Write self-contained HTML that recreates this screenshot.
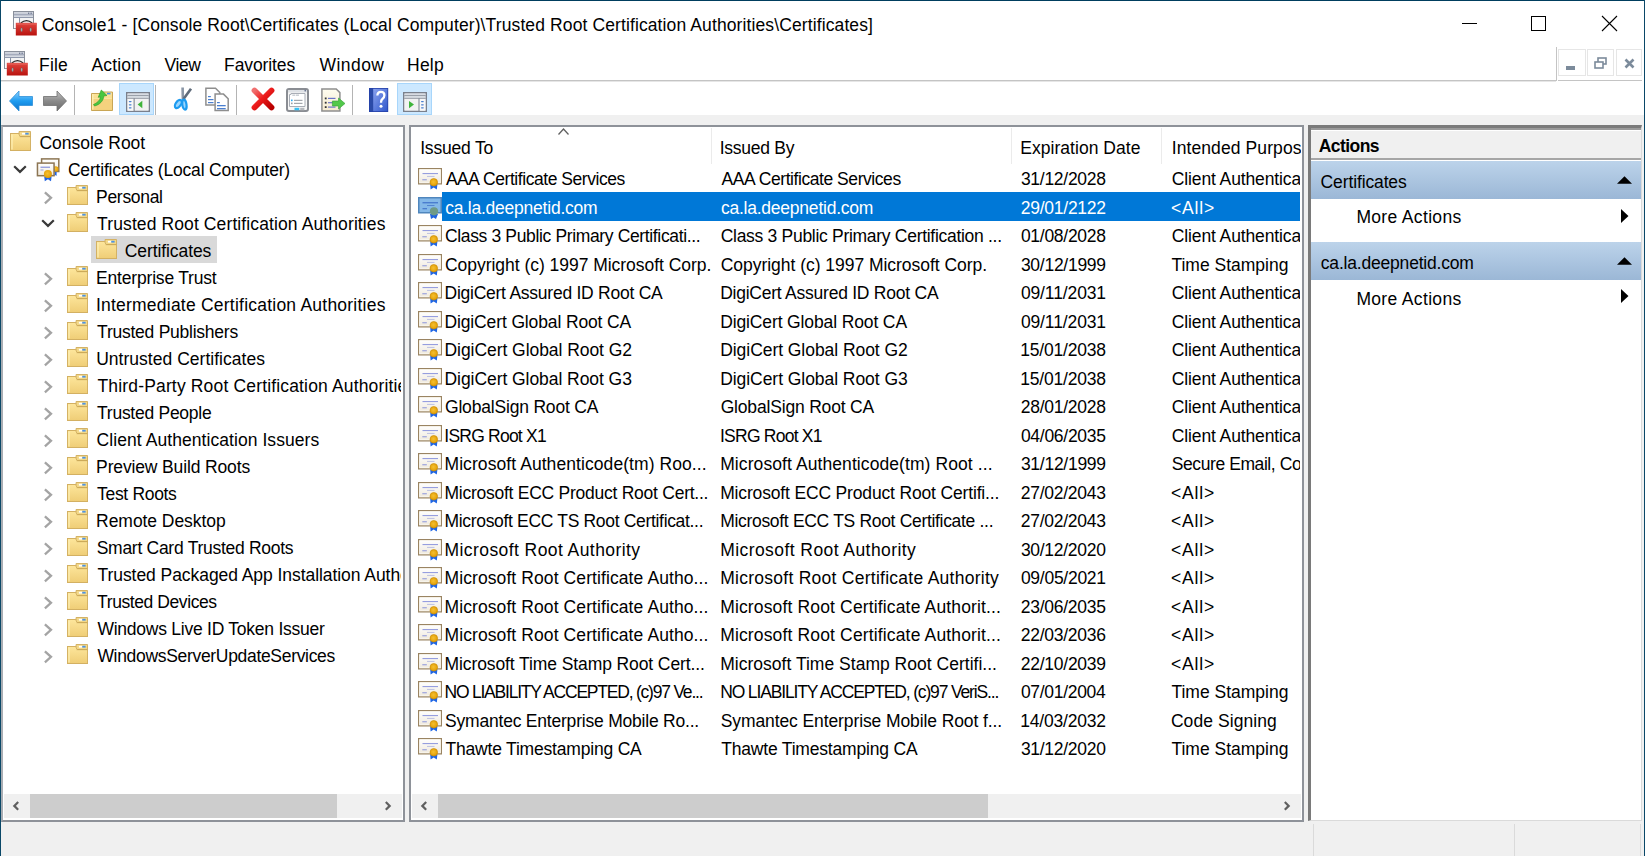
<!DOCTYPE html>
<html><head><meta charset="utf-8"><title>Console1</title>
<style>
html,body{margin:0;padding:0;width:1645px;height:856px;overflow:hidden;background:#f0f0f0}
body{position:relative;font-family:"Liberation Sans", sans-serif;}
.r{position:absolute}
.t{position:absolute;white-space:nowrap;line-height:normal;font-family:"Liberation Sans", sans-serif}
.i{position:absolute;overflow:visible}
</style></head><body>

<svg width="0" height="0" style="position:absolute">
<defs>
 <linearGradient id="gfold" x1="0" y1="0" x2="0" y2="1"><stop offset="0" stop-color="#fde69c"/><stop offset="1" stop-color="#efcd76"/></linearGradient>
 <linearGradient id="gcert" x1="0" y1="0" x2="0" y2="1"><stop offset="0" stop-color="#ffffff"/><stop offset="1" stop-color="#efe9dc"/></linearGradient>
 <radialGradient id="gseal" cx="0.45" cy="0.45" r="0.6"><stop offset="0" stop-color="#f5c030"/><stop offset="1" stop-color="#e09a00"/></radialGradient>
 <linearGradient id="gback" x1="0" y1="0" x2="0" y2="1"><stop offset="0" stop-color="#8fd3ff"/><stop offset="0.5" stop-color="#1e9cf0"/><stop offset="1" stop-color="#0a6fc9"/></linearGradient>
 <linearGradient id="gfwd" x1="0" y1="0" x2="0" y2="1"><stop offset="0" stop-color="#c4c4c4"/><stop offset="0.5" stop-color="#8a8a8a"/><stop offset="1" stop-color="#6a6a6a"/></linearGradient>
 <linearGradient id="ghead" x1="0" y1="0" x2="0" y2="1"><stop offset="0" stop-color="#bcd3ea"/><stop offset="1" stop-color="#9ab6d6"/></linearGradient>
 <linearGradient id="gbox" x1="0" y1="0" x2="0" y2="1"><stop offset="0" stop-color="#e2473f"/><stop offset="1" stop-color="#b8120e"/></linearGradient>

 </defs>
</svg>

<div class="r" style="left:0;top:0;width:1645px;height:856px;background:#f0f0f0"></div><div class="r" style="left:0px;top:0px;width:1645px;height:115px;background:#ffffff;"></div><div class="r" style="left:0px;top:0px;width:1645px;height:1px;background:#003e5e;"></div><div class="r" style="left:0px;top:0px;width:1px;height:856px;background:#0a4868;"></div><div class="r" style="left:1644px;top:0px;width:1px;height:856px;background:#0a4868;"></div><svg class="i" style="left:13px;top:11px" width="24" height="25" viewBox="0 0 24 25"><rect x="0.5" y="0.5" width="20" height="17" fill="#eef0f4" stroke="#8a909b"/> <rect x="1" y="1.2" width="19" height="2.2" fill="#c9ced8"/> <rect x="15" y="1.6" width="1.3" height="1.3" fill="#6a7590"/><rect x="17.5" y="1.6" width="1.3" height="1.3" fill="#6a7590"/> <rect x="1" y="3.5" width="19" height="1" fill="#6a7590"/> <rect x="1" y="4.5" width="19" height="1.6" fill="#d5dae2"/> <rect x="1" y="6.3" width="19" height="0.8" fill="#6a7590"/> <rect x="1" y="7.1" width="5.2" height="10" fill="#fbfbfb"/> <rect x="6.2" y="7.1" width="0.9" height="10" fill="#6a7590"/> <rect x="7.1" y="7.1" width="12.9" height="10" fill="#f4f4f4"/> <path d="M7.8 12 Q13.5 7.2 19.2 12" fill="none" stroke="#2a2a2a" stroke-width="1.3"/> <rect x="2.8" y="11.8" width="21" height="12.7" fill="url(#gbox)"/> <rect x="3.5" y="12.4" width="19.5" height="1.2" fill="#ea7a73" opacity="0.6"/> <ellipse cx="8.6" cy="18.7" rx="0.9" ry="2" fill="#a9b8b8" stroke="#6a4a4a" stroke-width="0.4"/> <ellipse cx="17.7" cy="18.7" rx="0.9" ry="2" fill="#a9b8b8" stroke="#6a4a4a" stroke-width="0.4"/></svg><div class="t" style="left:41.70px;top:15.16px;font-size:17.5px;color:#000;letter-spacing:0.113px;">Console1 - [Console Root\Certificates (Local Computer)\Trusted Root Certification Authorities\Certificates]</div><div class="r" style="left:1462px;top:23px;width:15px;height:1px;background:#000;"></div><div class="r" style="left:1531px;top:16px;width:15px;height:15px;background:transparent;border:1px solid #000;box-sizing:border-box"></div><svg class="i" style="left:1601px;top:15px" width="17" height="17"><path d="M1 1 L16 16 M16 1 L1 16" stroke="#000" stroke-width="1.1"/></svg><svg class="i" style="left:4px;top:51px" width="24" height="25" viewBox="0 0 24 25"><rect x="0.5" y="0.5" width="20" height="17" fill="#eef0f4" stroke="#8a909b"/> <rect x="1" y="1.2" width="19" height="2.2" fill="#c9ced8"/> <rect x="15" y="1.6" width="1.3" height="1.3" fill="#6a7590"/><rect x="17.5" y="1.6" width="1.3" height="1.3" fill="#6a7590"/> <rect x="1" y="3.5" width="19" height="1" fill="#6a7590"/> <rect x="1" y="4.5" width="19" height="1.6" fill="#d5dae2"/> <rect x="1" y="6.3" width="19" height="0.8" fill="#6a7590"/> <rect x="1" y="7.1" width="5.2" height="10" fill="#fbfbfb"/> <rect x="6.2" y="7.1" width="0.9" height="10" fill="#6a7590"/> <rect x="7.1" y="7.1" width="12.9" height="10" fill="#f4f4f4"/> <path d="M7.8 12 Q13.5 7.2 19.2 12" fill="none" stroke="#2a2a2a" stroke-width="1.3"/> <rect x="2.8" y="11.8" width="21" height="12.7" fill="url(#gbox)"/> <rect x="3.5" y="12.4" width="19.5" height="1.2" fill="#ea7a73" opacity="0.6"/> <ellipse cx="8.6" cy="18.7" rx="0.9" ry="2" fill="#a9b8b8" stroke="#6a4a4a" stroke-width="0.4"/> <ellipse cx="17.7" cy="18.7" rx="0.9" ry="2" fill="#a9b8b8" stroke="#6a4a4a" stroke-width="0.4"/></svg><div class="t" style="left:39.10px;top:55.16px;font-size:17.5px;color:#000;letter-spacing:0.133px;">File</div><div class="t" style="left:91.40px;top:55.16px;font-size:17.5px;color:#000;letter-spacing:0.180px;">Action</div><div class="t" style="left:164.50px;top:55.16px;font-size:17.5px;color:#000;letter-spacing:-0.400px;">View</div><div class="t" style="left:224.10px;top:55.16px;font-size:17.5px;color:#000;letter-spacing:-0.112px;">Favorites</div><div class="t" style="left:319.50px;top:55.16px;font-size:17.5px;color:#000;letter-spacing:0.440px;">Window</div><div class="t" style="left:407.10px;top:55.16px;font-size:17.5px;color:#000;letter-spacing:0.200px;">Help</div><div class="r" style="left:1px;top:80px;width:1555px;height:1px;background:#c4c4c4;"></div><div class="r" style="left:1px;top:81px;width:1555px;height:1px;background:#e6e6e6;"></div><div class="r" style="left:1556px;top:47px;width:1px;height:34px;background:#c4c4c4;"></div><div class="r" style="left:1558px;top:80px;width:84px;height:1px;background:#c4c4c4;"></div><div class="r" style="left:1558px;top:49px;width:28px;height:27px;background:transparent;border:1px solid #e6e6e6;box-sizing:border-box"></div><div class="r" style="left:1587px;top:49px;width:27px;height:27px;background:transparent;border:1px solid #e6e6e6;box-sizing:border-box"></div><div class="r" style="left:1616px;top:49px;width:26px;height:27px;background:transparent;border:1px solid #e6e6e6;box-sizing:border-box"></div><div class="r" style="left:1566px;top:66px;width:9px;height:4px;background:#7c8b9b;"></div><svg class="i" style="left:1594px;top:57px" width="13" height="12"><rect x="4" y="1" width="8" height="6" fill="none" stroke="#7c8b9b" stroke-width="1.6"/><rect x="1" y="5" width="8" height="6" fill="#fff" stroke="#7c8b9b" stroke-width="1.6"/></svg><svg class="i" style="left:1624px;top:58px" width="11" height="11"><path d="M1.5 1.5 L9.5 9.5 M9.5 1.5 L1.5 9.5" stroke="#7c8b9b" stroke-width="2.6"/></svg><svg class="i" style="left:8.5px;top:89.5px" width="24" height="22" viewBox="0 0 24 22"><path d="M0.5 11 L10 1 V6.5 H23.5 V15.5 H10 V21 Z" fill="url(#gback)" stroke="#2f8fd8" stroke-width="0.8"/></svg><svg class="i" style="left:43px;top:89.5px" width="24" height="22" viewBox="0 0 24 22"><path d="M23.5 11 L14 1 V6.5 H0.5 V15.5 H14 V21 Z" fill="url(#gfwd)" stroke="#6e6e6e" stroke-width="0.8"/></svg><div class="r" style="left:74px;top:85px;width:1px;height:30px;background:#b4b4b4;"></div><svg class="i" style="left:91px;top:89px" width="22" height="22" viewBox="0 0 22 22"><path d="M0.5 4.5 H11 V3 H21.5 V21.5 H0.5 Z" fill="url(#gfold)" stroke="#c9a655"/> <rect x="1.2" y="8.8" width="19.6" height="12" fill="#f5d27e"/> <rect x="1.2" y="8.8" width="19.6" height="1" fill="#fde9a8"/> <rect x="1.2" y="5" width="1.2" height="15.5" fill="#fff0b8"/> <rect x="16" y="3.8" width="3.5" height="1.6" fill="#4c93e6"/> <path d="M2.5 15.5 C6 14 9 11.5 9.5 8 L7.2 8.3 L10.3 1 L16 6.5 L12.8 7 C12.5 12 8.5 15.8 3.5 17 Z" fill="#48c640" stroke="#2a9a22" stroke-width="0.6"/></svg><div class="r" style="left:119px;top:83px;width:35px;height:32px;background:#cce8ff;border:1px solid #a8d6fb;box-sizing:border-box"></div><svg class="i" style="left:125.5px;top:92px" width="24" height="20" viewBox="0 0 24 20"><rect x="0.75" y="0.75" width="22.5" height="18.5" fill="#eef0f3" stroke="#7a808c" stroke-width="1.5"/> <rect x="1.5" y="1.5" width="21" height="1.8" fill="#d8dce3"/> <rect x="1.5" y="3.3" width="21" height="0.9" fill="#7a808c"/> <rect x="1.5" y="4.2" width="21" height="1.7" fill="#d8dce3"/> <rect x="1.5" y="5.9" width="21" height="0.9" fill="#7a808c"/> <rect x="1.5" y="6.8" width="6.2" height="12" fill="#f8f8f8"/> <rect x="7.6" y="6.8" width="1.2" height="12" fill="#7a808c"/> <rect x="2.8" y="9" width="2.8" height="1.2" rx="0.6" fill="#4a80d0"/><rect x="2.8" y="12.2" width="2.8" height="1.2" rx="0.6" fill="#4a80d0"/><rect x="2.8" y="15.2" width="2.8" height="1.2" rx="0.6" fill="#4a80d0"/> <rect x="8.8" y="6.8" width="13.7" height="11.7" fill="#f2f2f2"/> <path d="M16.3 8.8 L11.6 12.6 L16.3 16.3 Z" fill="#3fb43a"/></svg><div class="r" style="left:155px;top:85px;width:1px;height:30px;background:#b4b4b4;"></div><svg class="i" style="left:174px;top:87px" width="18" height="24" viewBox="0 0 18 24"><path d="M8.6 0.5 L8.9 12" stroke="#8a96a6" stroke-width="2.6"/> <path d="M17 1.8 L9.5 12" stroke="#5f6b7a" stroke-width="2.6"/> <ellipse cx="4.3" cy="17" rx="2.6" ry="4.6" transform="rotate(35 4.3 17)" fill="#9ad6ff" stroke="#1d9bf0" stroke-width="2.2"/> <ellipse cx="10.4" cy="17.6" rx="2.1" ry="5" transform="rotate(-8 10.4 17.6)" fill="#9ad6ff" stroke="#1d9bf0" stroke-width="2.2"/></svg><svg class="i" style="left:205px;top:88px" width="24" height="23" viewBox="0 0 24 23"><path d="M0.9 0.2 H10.5 L14.8 4.5 V17 H0.9 Z" fill="#fff" stroke="#8e8e8e" stroke-width="1.5"/> <rect x="3" y="8" width="2.8" height="1.2" fill="#4a7fd0"/><rect x="3" y="11" width="5.5" height="1.2" fill="#4a7fd0"/><rect x="3" y="14" width="5.5" height="1.2" fill="#4a7fd0"/> <path d="M10.1 6.1 H18.5 L23.2 10.8 V22.5 H10.1 Z" fill="#fff" stroke="#8e8e8e" stroke-width="1.5"/> <rect x="12" y="14" width="2.8" height="1.2" fill="#4a7fd0"/><rect x="12" y="17" width="8.7" height="1.3" fill="#4a7fd0"/><rect x="12" y="20" width="8.7" height="1.3" fill="#4a7fd0"/></svg><div class="r" style="left:236px;top:85px;width:1px;height:30px;background:#b4b4b4;"></div><svg class="i" style="left:251px;top:87px" width="24" height="24" viewBox="0 0 24 24"><defs><linearGradient id="gdel" x1="0" y1="0" x2="1" y2="1"><stop offset="0" stop-color="#f07070"/><stop offset="0.45" stop-color="#ee1c1c"/><stop offset="1" stop-color="#b80000"/></linearGradient></defs> <path d="M3.5 3.5 L20.5 20.5 M20.5 3.5 L3.5 20.5" stroke="url(#gdel)" stroke-width="5.8" stroke-linecap="round"/></svg><svg class="i" style="left:286px;top:87.5px" width="23" height="24" viewBox="0 0 23 24"><rect x="1" y="1" width="21" height="22" rx="2" fill="#f7f7f7" stroke="#8a8d93" stroke-width="2"/> <rect x="2" y="2" width="19" height="2.5" fill="#dfe2e6"/> <rect x="18.5" y="1.8" width="1.6" height="1.6" fill="#6a7590"/> <path d="M3.5 6.5 H5 V5.5 H19 V18.5 H3.5 Z" fill="#fff" stroke="#a9aeb6" stroke-width="1"/> <rect x="6.3" y="6.5" width="3" height="1.4" fill="#c8ccd2"/><rect x="10" y="6.5" width="3" height="1.4" fill="#c8ccd2"/> <rect x="5" y="11.6" width="1.6" height="1.6" fill="#2aa8f4"/><rect x="8" y="11.8" width="8.5" height="1.1" fill="#9a9ea5"/> <rect x="5" y="14.6" width="1.6" height="1.6" fill="#9a9ea5"/><rect x="8" y="14.8" width="8.5" height="1.1" fill="#9a9ea5"/> <rect x="8.5" y="19.8" width="4.8" height="2.5" fill="#36c0f4"/> <rect x="14.2" y="19.8" width="4.2" height="2.5" fill="#b5b8bd"/></svg><svg class="i" style="left:320.5px;top:87.5px" width="25" height="24" viewBox="0 0 25 24"><defs><linearGradient id="gexp" x1="0" y1="0" x2="0" y2="1"><stop offset="0" stop-color="#fffdf0"/><stop offset="1" stop-color="#f4ead0"/></linearGradient></defs> <path d="M0.9 0.9 H15.2 L18.9 4.6 V23.1 H0.9 Z" fill="url(#gexp)" stroke="#8e8e8e" stroke-width="1.5"/> <rect x="3.8" y="9.5" width="1.8" height="1.8" fill="#333"/><rect x="7" y="9.8" width="7.5" height="1.2" fill="#6a74c8"/> <rect x="3.8" y="13.8" width="1.8" height="1.8" fill="#333"/><rect x="7" y="14.1" width="7.5" height="1.2" fill="#6a74c8"/> <rect x="3.8" y="18.2" width="1.8" height="1.8" fill="#333"/><rect x="7" y="18.5" width="7.5" height="1.2" fill="#6a74c8"/> <path d="M11.4 13 H17.5 V10 L24 15.5 L17.5 21 V18 H11.4 Z" fill="#52c84a" stroke="#35a035" stroke-width="0.6"/></svg><div class="r" style="left:352px;top:85px;width:1px;height:30px;background:#b4b4b4;"></div><svg class="i" style="left:368.5px;top:87.5px" width="20" height="24" viewBox="0 0 20 24"><defs><linearGradient id="ghelp" x1="0" y1="0" x2="1" y2="1"><stop offset="0" stop-color="#8aa2ee"/><stop offset="1" stop-color="#3158cc"/></linearGradient></defs> <rect x="0" y="0" width="19.2" height="24" fill="#2440a8"/> <rect x="0.8" y="0.8" width="3.4" height="22.4" fill="#2b4aa8"/> <rect x="4.2" y="0.8" width="14.2" height="22.4" fill="url(#ghelp)"/> <path d="M8.4 7.5 Q8.4 3.8 12 3.8 Q15.4 3.8 15.4 7.3 Q15.4 9.6 13.4 11 Q12 12 12 14.8" fill="none" stroke="#fff" stroke-width="2.3"/> <circle cx="12" cy="18.3" r="1.5" fill="#fff"/></svg><div class="r" style="left:397px;top:83px;width:35px;height:32px;background:#cce8ff;border:1px solid #a8d6fb;box-sizing:border-box"></div><svg class="i" style="left:403px;top:92px" width="24" height="20" viewBox="0 0 24 20"><rect x="0.75" y="0.75" width="22.5" height="18.5" fill="#eef0f3" stroke="#7a808c" stroke-width="1.5"/> <rect x="1.5" y="1.5" width="21" height="1.8" fill="#d8dce3"/> <rect x="1.5" y="3.3" width="21" height="0.9" fill="#7a808c"/> <rect x="1.5" y="4.2" width="21" height="1.7" fill="#d8dce3"/> <rect x="1.5" y="5.9" width="21" height="0.9" fill="#7a808c"/> <rect x="1.5" y="6.8" width="14" height="11.7" fill="#f2f2f2"/> <rect x="15.5" y="6.8" width="1.2" height="12" fill="#7a808c"/> <rect x="16.7" y="6.8" width="5.8" height="12" fill="#f8f8f8"/> <rect x="18" y="9" width="2.8" height="1.2" rx="0.6" fill="#4a80d0"/><rect x="18" y="12.2" width="2.8" height="1.2" rx="0.6" fill="#4a80d0"/><rect x="18" y="15.2" width="2.8" height="1.2" rx="0.6" fill="#4a80d0"/> <path d="M6 9 L11 12.6 L6 16.3 Z" fill="#3fb43a"/></svg><div class="r" style="left:1px;top:125px;width:404px;height:697px;background:#fff;border:2px solid #8e9299;box-sizing:border-box;border-left-color:#a9adb3"></div><div class="r" style="left:3px;top:127px;width:398px;height:666px;overflow:hidden"><svg class="i" style="left:7px;top:4.099999999999994px" width="21" height="20" viewBox="0 0 22 20" preserveAspectRatio="none"><path d="M0.5 2.5 H9.5 V19.5 H21.5 V19.5 H0.5 Z" fill="#e6c46c"/> <rect x="0.5" y="2.5" width="21" height="17" fill="url(#gfold)" stroke="#d3b062"/> <rect x="1.5" y="3.5" width="1.2" height="15" fill="#fff2b8"/> <path d="M9.5 0.5 H21.5 V5.5 H11 L9.5 4 Z" fill="#f3d888" stroke="#d3b062"/> <rect x="10" y="5" width="11.5" height="1.2" fill="#c9a655" opacity="0.7"/> <rect x="12.5" y="1.8" width="3.5" height="1.8" fill="#ffffff"/> <rect x="16" y="1.8" width="3.5" height="1.8" fill="#4c93e6"/></svg><div class="t" style="left:36.50px;top:6.06px;font-size:17.5px;color:#000;letter-spacing:-0.036px;">Console Root</div><svg class="i" style="left:9.5px;top:37.920000000000016px" width="14" height="10" viewBox="0 0 14 10"><path d="M1.2 1.2 L7 6.9 L12.8 1.2" fill="none" stroke="#3a3a3a" stroke-width="2.2"/></svg><svg class="i" style="left:34.3px;top:30.920000000000016px" width="24" height="24" viewBox="0 0 24 24"><rect x="4.6" y="0.9" width="17.2" height="12.6" fill="url(#gcert)" stroke="#8c7553" stroke-width="1.5"/> <path d="M17.5 13.5 L17.5 18 L18.5 17 L19.6 18 L19.6 13.5 Z" fill="#1f63e0"/> <circle cx="18.7" cy="11" r="2.8" fill="url(#gseal)"/> <rect x="0.45" y="5.1" width="16.6" height="12.6" fill="url(#gcert)" stroke="#8c7553" stroke-width="1.5"/> <rect x="3.5" y="8.6" width="9.5" height="1.3" fill="#6b78d6" opacity="0.75"/> <rect x="3.5" y="11.4" width="3" height="1.2" fill="#8a93d8" opacity="0.7"/> <path d="M7.2 18.5 L7.8 23.2 L10.9 21.3 L14 23.2 L14.6 18.5 Z" fill="#1f63e0"/> <circle cx="10.9" cy="15.9" r="4" fill="url(#gseal)"/></svg><div class="t" style="left:64.90px;top:33.08px;font-size:17.5px;color:#000;letter-spacing:-0.189px;">Certificates (Local Computer)</div><svg class="i" style="left:40.3px;top:63.53999999999999px" width="10" height="14" viewBox="0 0 10 14"><path d="M1.9 1.3 L8 6.8 L1.9 12.3" fill="none" stroke="#a4a4a4" stroke-width="2.3"/></svg><svg class="i" style="left:64px;top:58.139999999999986px" width="21" height="20" viewBox="0 0 22 20" preserveAspectRatio="none"><path d="M0.5 2.5 H9.5 V19.5 H21.5 V19.5 H0.5 Z" fill="#e6c46c"/> <rect x="0.5" y="2.5" width="21" height="17" fill="url(#gfold)" stroke="#d3b062"/> <rect x="1.5" y="3.5" width="1.2" height="15" fill="#fff2b8"/> <path d="M9.5 0.5 H21.5 V5.5 H11 L9.5 4 Z" fill="#f3d888" stroke="#d3b062"/> <rect x="10" y="5" width="11.5" height="1.2" fill="#c9a655" opacity="0.7"/> <rect x="12.5" y="1.8" width="3.5" height="1.8" fill="#ffffff"/> <rect x="16" y="1.8" width="3.5" height="1.8" fill="#4c93e6"/></svg><div class="t" style="left:93.10px;top:60.10px;font-size:17.5px;color:#000;letter-spacing:-0.314px;">Personal</div><svg class="i" style="left:38.0px;top:91.96000000000001px" width="14" height="10" viewBox="0 0 14 10"><path d="M1.2 1.2 L7 6.9 L12.8 1.2" fill="none" stroke="#3a3a3a" stroke-width="2.2"/></svg><svg class="i" style="left:64px;top:85.16px" width="21" height="20" viewBox="0 0 22 20" preserveAspectRatio="none"><path d="M0.5 2.5 H9.5 V19.5 H21.5 V19.5 H0.5 Z" fill="#e6c46c"/> <rect x="0.5" y="2.5" width="21" height="17" fill="url(#gfold)" stroke="#d3b062"/> <rect x="1.5" y="3.5" width="1.2" height="15" fill="#fff2b8"/> <path d="M9.5 0.5 H21.5 V5.5 H11 L9.5 4 Z" fill="#f3d888" stroke="#d3b062"/> <rect x="10" y="5" width="11.5" height="1.2" fill="#c9a655" opacity="0.7"/> <rect x="12.5" y="1.8" width="3.5" height="1.8" fill="#ffffff"/> <rect x="16" y="1.8" width="3.5" height="1.8" fill="#4c93e6"/></svg><div class="t" style="left:94.10px;top:87.12px;font-size:17.5px;color:#000;letter-spacing:0.108px;">Trusted Root Certification Authorities</div><div class="r" style="left:88px;top:109.19999999999999px;width:125.8px;height:26.6px;background:#d9d9d9;"></div><svg class="i" style="left:92.7px;top:112.18px" width="21" height="20" viewBox="0 0 22 20" preserveAspectRatio="none"><path d="M0.5 2.5 H9.5 V19.5 H21.5 V19.5 H0.5 Z" fill="#e6c46c"/> <rect x="0.5" y="2.5" width="21" height="17" fill="url(#gfold)" stroke="#d3b062"/> <rect x="1.5" y="3.5" width="1.2" height="15" fill="#fff2b8"/> <path d="M9.5 0.5 H21.5 V5.5 H11 L9.5 4 Z" fill="#f3d888" stroke="#d3b062"/> <rect x="10" y="5" width="11.5" height="1.2" fill="#c9a655" opacity="0.7"/> <rect x="12.5" y="1.8" width="3.5" height="1.8" fill="#ffffff"/> <rect x="16" y="1.8" width="3.5" height="1.8" fill="#4c93e6"/></svg><div class="t" style="left:121.70px;top:114.14px;font-size:17.5px;color:#000;letter-spacing:-0.082px;">Certificates</div><svg class="i" style="left:40.3px;top:144.60000000000002px" width="10" height="14" viewBox="0 0 10 14"><path d="M1.9 1.3 L8 6.8 L1.9 12.3" fill="none" stroke="#a4a4a4" stroke-width="2.3"/></svg><svg class="i" style="left:64px;top:139.2px" width="21" height="20" viewBox="0 0 22 20" preserveAspectRatio="none"><path d="M0.5 2.5 H9.5 V19.5 H21.5 V19.5 H0.5 Z" fill="#e6c46c"/> <rect x="0.5" y="2.5" width="21" height="17" fill="url(#gfold)" stroke="#d3b062"/> <rect x="1.5" y="3.5" width="1.2" height="15" fill="#fff2b8"/> <path d="M9.5 0.5 H21.5 V5.5 H11 L9.5 4 Z" fill="#f3d888" stroke="#d3b062"/> <rect x="10" y="5" width="11.5" height="1.2" fill="#c9a655" opacity="0.7"/> <rect x="12.5" y="1.8" width="3.5" height="1.8" fill="#ffffff"/> <rect x="16" y="1.8" width="3.5" height="1.8" fill="#4c93e6"/></svg><div class="t" style="left:93.10px;top:141.16px;font-size:17.5px;color:#000;letter-spacing:-0.193px;">Enterprise Trust</div><svg class="i" style="left:40.3px;top:171.62px" width="10" height="14" viewBox="0 0 10 14"><path d="M1.9 1.3 L8 6.8 L1.9 12.3" fill="none" stroke="#a4a4a4" stroke-width="2.3"/></svg><svg class="i" style="left:64px;top:166.21999999999997px" width="21" height="20" viewBox="0 0 22 20" preserveAspectRatio="none"><path d="M0.5 2.5 H9.5 V19.5 H21.5 V19.5 H0.5 Z" fill="#e6c46c"/> <rect x="0.5" y="2.5" width="21" height="17" fill="url(#gfold)" stroke="#d3b062"/> <rect x="1.5" y="3.5" width="1.2" height="15" fill="#fff2b8"/> <path d="M9.5 0.5 H21.5 V5.5 H11 L9.5 4 Z" fill="#f3d888" stroke="#d3b062"/> <rect x="10" y="5" width="11.5" height="1.2" fill="#c9a655" opacity="0.7"/> <rect x="12.5" y="1.8" width="3.5" height="1.8" fill="#ffffff"/> <rect x="16" y="1.8" width="3.5" height="1.8" fill="#4c93e6"/></svg><div class="t" style="left:92.90px;top:168.18px;font-size:17.5px;color:#000;letter-spacing:0.227px;">Intermediate Certification Authorities</div><svg class="i" style="left:40.3px;top:198.64px" width="10" height="14" viewBox="0 0 10 14"><path d="M1.9 1.3 L8 6.8 L1.9 12.3" fill="none" stroke="#a4a4a4" stroke-width="2.3"/></svg><svg class="i" style="left:64px;top:193.23999999999995px" width="21" height="20" viewBox="0 0 22 20" preserveAspectRatio="none"><path d="M0.5 2.5 H9.5 V19.5 H21.5 V19.5 H0.5 Z" fill="#e6c46c"/> <rect x="0.5" y="2.5" width="21" height="17" fill="url(#gfold)" stroke="#d3b062"/> <rect x="1.5" y="3.5" width="1.2" height="15" fill="#fff2b8"/> <path d="M9.5 0.5 H21.5 V5.5 H11 L9.5 4 Z" fill="#f3d888" stroke="#d3b062"/> <rect x="10" y="5" width="11.5" height="1.2" fill="#c9a655" opacity="0.7"/> <rect x="12.5" y="1.8" width="3.5" height="1.8" fill="#ffffff"/> <rect x="16" y="1.8" width="3.5" height="1.8" fill="#4c93e6"/></svg><div class="t" style="left:94.10px;top:195.20px;font-size:17.5px;color:#000;letter-spacing:-0.247px;">Trusted Publishers</div><svg class="i" style="left:40.3px;top:225.66000000000003px" width="10" height="14" viewBox="0 0 10 14"><path d="M1.9 1.3 L8 6.8 L1.9 12.3" fill="none" stroke="#a4a4a4" stroke-width="2.3"/></svg><svg class="i" style="left:64px;top:220.26px" width="21" height="20" viewBox="0 0 22 20" preserveAspectRatio="none"><path d="M0.5 2.5 H9.5 V19.5 H21.5 V19.5 H0.5 Z" fill="#e6c46c"/> <rect x="0.5" y="2.5" width="21" height="17" fill="url(#gfold)" stroke="#d3b062"/> <rect x="1.5" y="3.5" width="1.2" height="15" fill="#fff2b8"/> <path d="M9.5 0.5 H21.5 V5.5 H11 L9.5 4 Z" fill="#f3d888" stroke="#d3b062"/> <rect x="10" y="5" width="11.5" height="1.2" fill="#c9a655" opacity="0.7"/> <rect x="12.5" y="1.8" width="3.5" height="1.8" fill="#ffffff"/> <rect x="16" y="1.8" width="3.5" height="1.8" fill="#4c93e6"/></svg><div class="t" style="left:93.20px;top:222.22px;font-size:17.5px;color:#000;letter-spacing:0.024px;">Untrusted Certificates</div><svg class="i" style="left:40.3px;top:252.68000000000006px" width="10" height="14" viewBox="0 0 10 14"><path d="M1.9 1.3 L8 6.8 L1.9 12.3" fill="none" stroke="#a4a4a4" stroke-width="2.3"/></svg><svg class="i" style="left:64px;top:247.28000000000003px" width="21" height="20" viewBox="0 0 22 20" preserveAspectRatio="none"><path d="M0.5 2.5 H9.5 V19.5 H21.5 V19.5 H0.5 Z" fill="#e6c46c"/> <rect x="0.5" y="2.5" width="21" height="17" fill="url(#gfold)" stroke="#d3b062"/> <rect x="1.5" y="3.5" width="1.2" height="15" fill="#fff2b8"/> <path d="M9.5 0.5 H21.5 V5.5 H11 L9.5 4 Z" fill="#f3d888" stroke="#d3b062"/> <rect x="10" y="5" width="11.5" height="1.2" fill="#c9a655" opacity="0.7"/> <rect x="12.5" y="1.8" width="3.5" height="1.8" fill="#ffffff"/> <rect x="16" y="1.8" width="3.5" height="1.8" fill="#4c93e6"/></svg><div class="t" style="left:94.50px;top:249.24px;font-size:17.5px;color:#000;letter-spacing:0.160px;">Third-Party Root Certification Authorities</div><svg class="i" style="left:40.3px;top:279.70000000000005px" width="10" height="14" viewBox="0 0 10 14"><path d="M1.9 1.3 L8 6.8 L1.9 12.3" fill="none" stroke="#a4a4a4" stroke-width="2.3"/></svg><svg class="i" style="left:64px;top:274.3px" width="21" height="20" viewBox="0 0 22 20" preserveAspectRatio="none"><path d="M0.5 2.5 H9.5 V19.5 H21.5 V19.5 H0.5 Z" fill="#e6c46c"/> <rect x="0.5" y="2.5" width="21" height="17" fill="url(#gfold)" stroke="#d3b062"/> <rect x="1.5" y="3.5" width="1.2" height="15" fill="#fff2b8"/> <path d="M9.5 0.5 H21.5 V5.5 H11 L9.5 4 Z" fill="#f3d888" stroke="#d3b062"/> <rect x="10" y="5" width="11.5" height="1.2" fill="#c9a655" opacity="0.7"/> <rect x="12.5" y="1.8" width="3.5" height="1.8" fill="#ffffff"/> <rect x="16" y="1.8" width="3.5" height="1.8" fill="#4c93e6"/></svg><div class="t" style="left:94.10px;top:276.26px;font-size:17.5px;color:#000;letter-spacing:-0.269px;">Trusted People</div><svg class="i" style="left:40.3px;top:306.72px" width="10" height="14" viewBox="0 0 10 14"><path d="M1.9 1.3 L8 6.8 L1.9 12.3" fill="none" stroke="#a4a4a4" stroke-width="2.3"/></svg><svg class="i" style="left:64px;top:301.32px" width="21" height="20" viewBox="0 0 22 20" preserveAspectRatio="none"><path d="M0.5 2.5 H9.5 V19.5 H21.5 V19.5 H0.5 Z" fill="#e6c46c"/> <rect x="0.5" y="2.5" width="21" height="17" fill="url(#gfold)" stroke="#d3b062"/> <rect x="1.5" y="3.5" width="1.2" height="15" fill="#fff2b8"/> <path d="M9.5 0.5 H21.5 V5.5 H11 L9.5 4 Z" fill="#f3d888" stroke="#d3b062"/> <rect x="10" y="5" width="11.5" height="1.2" fill="#c9a655" opacity="0.7"/> <rect x="12.5" y="1.8" width="3.5" height="1.8" fill="#ffffff"/> <rect x="16" y="1.8" width="3.5" height="1.8" fill="#4c93e6"/></svg><div class="t" style="left:93.60px;top:303.28px;font-size:17.5px;color:#000;letter-spacing:0.064px;">Client Authentication Issuers</div><svg class="i" style="left:40.3px;top:333.74px" width="10" height="14" viewBox="0 0 10 14"><path d="M1.9 1.3 L8 6.8 L1.9 12.3" fill="none" stroke="#a4a4a4" stroke-width="2.3"/></svg><svg class="i" style="left:64px;top:328.34px" width="21" height="20" viewBox="0 0 22 20" preserveAspectRatio="none"><path d="M0.5 2.5 H9.5 V19.5 H21.5 V19.5 H0.5 Z" fill="#e6c46c"/> <rect x="0.5" y="2.5" width="21" height="17" fill="url(#gfold)" stroke="#d3b062"/> <rect x="1.5" y="3.5" width="1.2" height="15" fill="#fff2b8"/> <path d="M9.5 0.5 H21.5 V5.5 H11 L9.5 4 Z" fill="#f3d888" stroke="#d3b062"/> <rect x="10" y="5" width="11.5" height="1.2" fill="#c9a655" opacity="0.7"/> <rect x="12.5" y="1.8" width="3.5" height="1.8" fill="#ffffff"/> <rect x="16" y="1.8" width="3.5" height="1.8" fill="#4c93e6"/></svg><div class="t" style="left:93.10px;top:330.30px;font-size:17.5px;color:#000;letter-spacing:-0.139px;">Preview Build Roots</div><svg class="i" style="left:40.3px;top:360.76px" width="10" height="14" viewBox="0 0 10 14"><path d="M1.9 1.3 L8 6.8 L1.9 12.3" fill="none" stroke="#a4a4a4" stroke-width="2.3"/></svg><svg class="i" style="left:64px;top:355.35999999999996px" width="21" height="20" viewBox="0 0 22 20" preserveAspectRatio="none"><path d="M0.5 2.5 H9.5 V19.5 H21.5 V19.5 H0.5 Z" fill="#e6c46c"/> <rect x="0.5" y="2.5" width="21" height="17" fill="url(#gfold)" stroke="#d3b062"/> <rect x="1.5" y="3.5" width="1.2" height="15" fill="#fff2b8"/> <path d="M9.5 0.5 H21.5 V5.5 H11 L9.5 4 Z" fill="#f3d888" stroke="#d3b062"/> <rect x="10" y="5" width="11.5" height="1.2" fill="#c9a655" opacity="0.7"/> <rect x="12.5" y="1.8" width="3.5" height="1.8" fill="#ffffff"/> <rect x="16" y="1.8" width="3.5" height="1.8" fill="#4c93e6"/></svg><div class="t" style="left:94.10px;top:357.32px;font-size:17.5px;color:#000;letter-spacing:-0.322px;">Test Roots</div><svg class="i" style="left:40.3px;top:387.78px" width="10" height="14" viewBox="0 0 10 14"><path d="M1.9 1.3 L8 6.8 L1.9 12.3" fill="none" stroke="#a4a4a4" stroke-width="2.3"/></svg><svg class="i" style="left:64px;top:382.37999999999994px" width="21" height="20" viewBox="0 0 22 20" preserveAspectRatio="none"><path d="M0.5 2.5 H9.5 V19.5 H21.5 V19.5 H0.5 Z" fill="#e6c46c"/> <rect x="0.5" y="2.5" width="21" height="17" fill="url(#gfold)" stroke="#d3b062"/> <rect x="1.5" y="3.5" width="1.2" height="15" fill="#fff2b8"/> <path d="M9.5 0.5 H21.5 V5.5 H11 L9.5 4 Z" fill="#f3d888" stroke="#d3b062"/> <rect x="10" y="5" width="11.5" height="1.2" fill="#c9a655" opacity="0.7"/> <rect x="12.5" y="1.8" width="3.5" height="1.8" fill="#ffffff"/> <rect x="16" y="1.8" width="3.5" height="1.8" fill="#4c93e6"/></svg><div class="t" style="left:93.10px;top:384.34px;font-size:17.5px;color:#000;letter-spacing:-0.054px;">Remote Desktop</div><svg class="i" style="left:40.3px;top:414.80000000000007px" width="10" height="14" viewBox="0 0 10 14"><path d="M1.9 1.3 L8 6.8 L1.9 12.3" fill="none" stroke="#a4a4a4" stroke-width="2.3"/></svg><svg class="i" style="left:64px;top:409.4000000000001px" width="21" height="20" viewBox="0 0 22 20" preserveAspectRatio="none"><path d="M0.5 2.5 H9.5 V19.5 H21.5 V19.5 H0.5 Z" fill="#e6c46c"/> <rect x="0.5" y="2.5" width="21" height="17" fill="url(#gfold)" stroke="#d3b062"/> <rect x="1.5" y="3.5" width="1.2" height="15" fill="#fff2b8"/> <path d="M9.5 0.5 H21.5 V5.5 H11 L9.5 4 Z" fill="#f3d888" stroke="#d3b062"/> <rect x="10" y="5" width="11.5" height="1.2" fill="#c9a655" opacity="0.7"/> <rect x="12.5" y="1.8" width="3.5" height="1.8" fill="#ffffff"/> <rect x="16" y="1.8" width="3.5" height="1.8" fill="#4c93e6"/></svg><div class="t" style="left:93.70px;top:411.36px;font-size:17.5px;color:#000;letter-spacing:-0.278px;">Smart Card Trusted Roots</div><svg class="i" style="left:40.3px;top:441.82000000000005px" width="10" height="14" viewBox="0 0 10 14"><path d="M1.9 1.3 L8 6.8 L1.9 12.3" fill="none" stroke="#a4a4a4" stroke-width="2.3"/></svg><svg class="i" style="left:64px;top:436.4200000000001px" width="21" height="20" viewBox="0 0 22 20" preserveAspectRatio="none"><path d="M0.5 2.5 H9.5 V19.5 H21.5 V19.5 H0.5 Z" fill="#e6c46c"/> <rect x="0.5" y="2.5" width="21" height="17" fill="url(#gfold)" stroke="#d3b062"/> <rect x="1.5" y="3.5" width="1.2" height="15" fill="#fff2b8"/> <path d="M9.5 0.5 H21.5 V5.5 H11 L9.5 4 Z" fill="#f3d888" stroke="#d3b062"/> <rect x="10" y="5" width="11.5" height="1.2" fill="#c9a655" opacity="0.7"/> <rect x="12.5" y="1.8" width="3.5" height="1.8" fill="#ffffff"/> <rect x="16" y="1.8" width="3.5" height="1.8" fill="#4c93e6"/></svg><div class="t" style="left:94.50px;top:438.38px;font-size:17.5px;color:#000;letter-spacing:-0.060px;">Trusted Packaged App Installation Authorities</div><svg class="i" style="left:40.3px;top:468.84000000000003px" width="10" height="14" viewBox="0 0 10 14"><path d="M1.9 1.3 L8 6.8 L1.9 12.3" fill="none" stroke="#a4a4a4" stroke-width="2.3"/></svg><svg class="i" style="left:64px;top:463.44000000000005px" width="21" height="20" viewBox="0 0 22 20" preserveAspectRatio="none"><path d="M0.5 2.5 H9.5 V19.5 H21.5 V19.5 H0.5 Z" fill="#e6c46c"/> <rect x="0.5" y="2.5" width="21" height="17" fill="url(#gfold)" stroke="#d3b062"/> <rect x="1.5" y="3.5" width="1.2" height="15" fill="#fff2b8"/> <path d="M9.5 0.5 H21.5 V5.5 H11 L9.5 4 Z" fill="#f3d888" stroke="#d3b062"/> <rect x="10" y="5" width="11.5" height="1.2" fill="#c9a655" opacity="0.7"/> <rect x="12.5" y="1.8" width="3.5" height="1.8" fill="#ffffff"/> <rect x="16" y="1.8" width="3.5" height="1.8" fill="#4c93e6"/></svg><div class="t" style="left:94.10px;top:465.40px;font-size:17.5px;color:#000;letter-spacing:-0.414px;">Trusted Devices</div><svg class="i" style="left:40.3px;top:495.86px" width="10" height="14" viewBox="0 0 10 14"><path d="M1.9 1.3 L8 6.8 L1.9 12.3" fill="none" stroke="#a4a4a4" stroke-width="2.3"/></svg><svg class="i" style="left:64px;top:490.46000000000004px" width="21" height="20" viewBox="0 0 22 20" preserveAspectRatio="none"><path d="M0.5 2.5 H9.5 V19.5 H21.5 V19.5 H0.5 Z" fill="#e6c46c"/> <rect x="0.5" y="2.5" width="21" height="17" fill="url(#gfold)" stroke="#d3b062"/> <rect x="1.5" y="3.5" width="1.2" height="15" fill="#fff2b8"/> <path d="M9.5 0.5 H21.5 V5.5 H11 L9.5 4 Z" fill="#f3d888" stroke="#d3b062"/> <rect x="10" y="5" width="11.5" height="1.2" fill="#c9a655" opacity="0.7"/> <rect x="12.5" y="1.8" width="3.5" height="1.8" fill="#ffffff"/> <rect x="16" y="1.8" width="3.5" height="1.8" fill="#4c93e6"/></svg><div class="t" style="left:94.40px;top:492.42px;font-size:17.5px;color:#000;letter-spacing:-0.244px;">Windows Live ID Token Issuer</div><svg class="i" style="left:40.3px;top:522.88px" width="10" height="14" viewBox="0 0 10 14"><path d="M1.9 1.3 L8 6.8 L1.9 12.3" fill="none" stroke="#a4a4a4" stroke-width="2.3"/></svg><svg class="i" style="left:64px;top:517.48px" width="21" height="20" viewBox="0 0 22 20" preserveAspectRatio="none"><path d="M0.5 2.5 H9.5 V19.5 H21.5 V19.5 H0.5 Z" fill="#e6c46c"/> <rect x="0.5" y="2.5" width="21" height="17" fill="url(#gfold)" stroke="#d3b062"/> <rect x="1.5" y="3.5" width="1.2" height="15" fill="#fff2b8"/> <path d="M9.5 0.5 H21.5 V5.5 H11 L9.5 4 Z" fill="#f3d888" stroke="#d3b062"/> <rect x="10" y="5" width="11.5" height="1.2" fill="#c9a655" opacity="0.7"/> <rect x="12.5" y="1.8" width="3.5" height="1.8" fill="#ffffff"/> <rect x="16" y="1.8" width="3.5" height="1.8" fill="#4c93e6"/></svg><div class="t" style="left:94.40px;top:519.44px;font-size:17.5px;color:#000;letter-spacing:-0.315px;">WindowsServerUpdateServices</div></div><div class="r" style="left:4px;top:794px;width:398px;height:24px;background:#f0f0f0;"></div><div class="r" style="left:29.5px;top:794px;width:307px;height:24px;background:#cdcdcd;"></div><svg class="i" style="left:11.5px;top:801px" width="8" height="10" viewBox="0 0 8 10"><path d="M6.2 1 L2.3 4.9 L6.2 8.8" fill="none" stroke="#606060" stroke-width="2.2"/></svg><svg class="i" style="left:383.5px;top:801px" width="8" height="10" viewBox="0 0 8 10"><path d="M1.8 1 L5.7 4.9 L1.8 8.8" fill="none" stroke="#606060" stroke-width="2.2"/></svg><div class="r" style="left:409px;top:125px;width:895px;height:697px;background:#fff;border:2px solid #8e9299;box-sizing:border-box"></div><div class="r" style="left:711px;top:128px;width:1px;height:36px;background:#ebebeb;"></div><div class="r" style="left:1011px;top:128px;width:1px;height:36px;background:#ebebeb;"></div><div class="r" style="left:1161px;top:128px;width:1px;height:36px;background:#ebebeb;"></div><svg class="i" style="left:557px;top:127px" width="13" height="9"><path d="M1.5 7.5 L6.5 2 L11.5 7.5" fill="none" stroke="#606060" stroke-width="1.3"/></svg><div class="t" style="left:420.20px;top:137.76px;font-size:17.5px;color:#000;letter-spacing:-0.188px;">Issued To</div><div class="t" style="left:719.70px;top:137.76px;font-size:17.5px;color:#000;letter-spacing:-0.262px;">Issued By</div><div class="t" style="left:1020.30px;top:137.76px;font-size:17.5px;color:#000;letter-spacing:0.036px;">Expiration Date</div><div class="t" style="left:1171.70px;top:137.76px;font-size:17.5px;color:#000;letter-spacing:0.100px;width:129.00px;overflow:hidden;">Intended Purposes</div><svg class="i" style="left:418px;top:168.20000000000002px" width="24" height="22" viewBox="0 0 24 22"><rect x="0.75" y="0.75" width="22.5" height="15" fill="url(#gcert)" stroke="#9a8462" stroke-width="1.5"/> <rect x="1.6" y="1.6" width="20.8" height="13.3" fill="none" stroke="#fffdf6" stroke-width="0.8"/> <rect x="4.5" y="5" width="15.5" height="1.1" fill="#7480d8" opacity="0.75"/> <rect x="9" y="7.9" width="7.5" height="0.9" fill="#9aa2dc" opacity="0.7"/> <rect x="4.3" y="11.2" width="4.5" height="1.1" fill="#7480d8" opacity="0.75"/> <path d="M12.2 16.5 L12.6 21.6 L15.7 19.6 L18.8 21.6 L19.4 16.5 Z" fill="#1f66e6"/> <circle cx="15.8" cy="14.3" r="3.8" fill="url(#gseal)" stroke="#c98a00" stroke-width="0.6"/></svg><div class="t" style="left:445.90px;top:169.46px;font-size:17.5px;color:#000;letter-spacing:-0.443px;">AAA Certificate Services</div><div class="t" style="left:721.60px;top:169.46px;font-size:17.5px;color:#000;letter-spacing:-0.439px;">AAA Certificate Services</div><div class="t" style="left:1020.90px;top:169.46px;font-size:17.5px;color:#000;letter-spacing:-0.278px;">31/12/2028</div><div class="t" style="left:1171.80px;top:169.46px;font-size:17.5px;color:#000;letter-spacing:-0.120px;width:128.70px;overflow:hidden;">Client Authentication</div><div class="r" style="left:442.2px;top:192.3px;width:858px;height:28.7px;background:#0078d7;"></div><svg class="i" style="left:418px;top:196.70000000000002px" width="24" height="22" viewBox="0 0 24 22"><rect x="0.75" y="0.75" width="22.5" height="15" fill="#84b8e8" stroke="#4f86bd" stroke-width="1.5"/> <rect x="4.5" y="5" width="15.5" height="1.4" fill="#3d6ec8" opacity="0.8"/> <rect x="9" y="8" width="7.5" height="1" fill="#3d6ec8" opacity="0.7"/> <rect x="4.5" y="11" width="4.5" height="1.3" fill="#3d6ec8" opacity="0.8"/> <path d="M12 17 L13 22 L15.5 20.5 L18 22 L20 17 Z" fill="#1f63e0"/> <circle cx="16" cy="14.3" r="4.1" fill="#6f9a86"/></svg><div class="t" style="left:445.20px;top:197.96px;font-size:17.5px;color:#fff;letter-spacing:-0.233px;">ca.la.deepnetid.com</div><div class="t" style="left:720.90px;top:197.96px;font-size:17.5px;color:#fff;letter-spacing:-0.228px;">ca.la.deepnetid.com</div><div class="t" style="left:1020.70px;top:197.96px;font-size:17.5px;color:#fff;letter-spacing:-0.244px;">29/01/2122</div><div class="t" style="left:1171.00px;top:197.96px;font-size:17.5px;color:#fff;letter-spacing:0.825px;">&lt;All&gt;</div><svg class="i" style="left:418px;top:225.20000000000002px" width="24" height="22" viewBox="0 0 24 22"><rect x="0.75" y="0.75" width="22.5" height="15" fill="url(#gcert)" stroke="#9a8462" stroke-width="1.5"/> <rect x="1.6" y="1.6" width="20.8" height="13.3" fill="none" stroke="#fffdf6" stroke-width="0.8"/> <rect x="4.5" y="5" width="15.5" height="1.1" fill="#7480d8" opacity="0.75"/> <rect x="9" y="7.9" width="7.5" height="0.9" fill="#9aa2dc" opacity="0.7"/> <rect x="4.3" y="11.2" width="4.5" height="1.1" fill="#7480d8" opacity="0.75"/> <path d="M12.2 16.5 L12.6 21.6 L15.7 19.6 L18.8 21.6 L19.4 16.5 Z" fill="#1f66e6"/> <circle cx="15.8" cy="14.3" r="3.8" fill="url(#gseal)" stroke="#c98a00" stroke-width="0.6"/></svg><div class="t" style="left:445.00px;top:226.46px;font-size:17.5px;color:#000;letter-spacing:-0.356px;">Class 3 Public Primary Certificati...</div><div class="t" style="left:720.70px;top:226.46px;font-size:17.5px;color:#000;letter-spacing:-0.292px;">Class 3 Public Primary Certification ...</div><div class="t" style="left:1020.90px;top:226.46px;font-size:17.5px;color:#000;letter-spacing:-0.278px;">01/08/2028</div><div class="t" style="left:1171.80px;top:226.46px;font-size:17.5px;color:#000;letter-spacing:-0.120px;width:128.70px;overflow:hidden;">Client Authentication</div><svg class="i" style="left:418px;top:253.70000000000002px" width="24" height="22" viewBox="0 0 24 22"><rect x="0.75" y="0.75" width="22.5" height="15" fill="url(#gcert)" stroke="#9a8462" stroke-width="1.5"/> <rect x="1.6" y="1.6" width="20.8" height="13.3" fill="none" stroke="#fffdf6" stroke-width="0.8"/> <rect x="4.5" y="5" width="15.5" height="1.1" fill="#7480d8" opacity="0.75"/> <rect x="9" y="7.9" width="7.5" height="0.9" fill="#9aa2dc" opacity="0.7"/> <rect x="4.3" y="11.2" width="4.5" height="1.1" fill="#7480d8" opacity="0.75"/> <path d="M12.2 16.5 L12.6 21.6 L15.7 19.6 L18.8 21.6 L19.4 16.5 Z" fill="#1f66e6"/> <circle cx="15.8" cy="14.3" r="3.8" fill="url(#gseal)" stroke="#c98a00" stroke-width="0.6"/></svg><div class="t" style="left:445.00px;top:254.96px;font-size:17.5px;color:#000;letter-spacing:-0.033px;">Copyright (c) 1997 Microsoft Corp.</div><div class="t" style="left:720.70px;top:254.96px;font-size:17.5px;color:#000;letter-spacing:-0.030px;">Copyright (c) 1997 Microsoft Corp.</div><div class="t" style="left:1020.90px;top:254.96px;font-size:17.5px;color:#000;letter-spacing:-0.267px;">30/12/1999</div><div class="t" style="left:1171.40px;top:254.96px;font-size:17.5px;color:#000;letter-spacing:0.000px;">Time Stamping</div><svg class="i" style="left:418px;top:282.2px" width="24" height="22" viewBox="0 0 24 22"><rect x="0.75" y="0.75" width="22.5" height="15" fill="url(#gcert)" stroke="#9a8462" stroke-width="1.5"/> <rect x="1.6" y="1.6" width="20.8" height="13.3" fill="none" stroke="#fffdf6" stroke-width="0.8"/> <rect x="4.5" y="5" width="15.5" height="1.1" fill="#7480d8" opacity="0.75"/> <rect x="9" y="7.9" width="7.5" height="0.9" fill="#9aa2dc" opacity="0.7"/> <rect x="4.3" y="11.2" width="4.5" height="1.1" fill="#7480d8" opacity="0.75"/> <path d="M12.2 16.5 L12.6 21.6 L15.7 19.6 L18.8 21.6 L19.4 16.5 Z" fill="#1f66e6"/> <circle cx="15.8" cy="14.3" r="3.8" fill="url(#gseal)" stroke="#c98a00" stroke-width="0.6"/></svg><div class="t" style="left:444.50px;top:283.46px;font-size:17.5px;color:#000;letter-spacing:-0.246px;">DigiCert Assured ID Root CA</div><div class="t" style="left:720.20px;top:283.46px;font-size:17.5px;color:#000;letter-spacing:-0.242px;">DigiCert Assured ID Root CA</div><div class="t" style="left:1020.90px;top:283.46px;font-size:17.5px;color:#000;letter-spacing:-0.122px;">09/11/2031</div><div class="t" style="left:1171.80px;top:283.46px;font-size:17.5px;color:#000;letter-spacing:-0.120px;width:128.70px;overflow:hidden;">Client Authentication</div><svg class="i" style="left:418px;top:310.7px" width="24" height="22" viewBox="0 0 24 22"><rect x="0.75" y="0.75" width="22.5" height="15" fill="url(#gcert)" stroke="#9a8462" stroke-width="1.5"/> <rect x="1.6" y="1.6" width="20.8" height="13.3" fill="none" stroke="#fffdf6" stroke-width="0.8"/> <rect x="4.5" y="5" width="15.5" height="1.1" fill="#7480d8" opacity="0.75"/> <rect x="9" y="7.9" width="7.5" height="0.9" fill="#9aa2dc" opacity="0.7"/> <rect x="4.3" y="11.2" width="4.5" height="1.1" fill="#7480d8" opacity="0.75"/> <path d="M12.2 16.5 L12.6 21.6 L15.7 19.6 L18.8 21.6 L19.4 16.5 Z" fill="#1f66e6"/> <circle cx="15.8" cy="14.3" r="3.8" fill="url(#gseal)" stroke="#c98a00" stroke-width="0.6"/></svg><div class="t" style="left:444.50px;top:311.96px;font-size:17.5px;color:#000;letter-spacing:-0.132px;">DigiCert Global Root CA</div><div class="t" style="left:720.20px;top:311.96px;font-size:17.5px;color:#000;letter-spacing:-0.127px;">DigiCert Global Root CA</div><div class="t" style="left:1020.90px;top:311.96px;font-size:17.5px;color:#000;letter-spacing:-0.122px;">09/11/2031</div><div class="t" style="left:1171.80px;top:311.96px;font-size:17.5px;color:#000;letter-spacing:-0.120px;width:128.70px;overflow:hidden;">Client Authentication</div><svg class="i" style="left:418px;top:339.2px" width="24" height="22" viewBox="0 0 24 22"><rect x="0.75" y="0.75" width="22.5" height="15" fill="url(#gcert)" stroke="#9a8462" stroke-width="1.5"/> <rect x="1.6" y="1.6" width="20.8" height="13.3" fill="none" stroke="#fffdf6" stroke-width="0.8"/> <rect x="4.5" y="5" width="15.5" height="1.1" fill="#7480d8" opacity="0.75"/> <rect x="9" y="7.9" width="7.5" height="0.9" fill="#9aa2dc" opacity="0.7"/> <rect x="4.3" y="11.2" width="4.5" height="1.1" fill="#7480d8" opacity="0.75"/> <path d="M12.2 16.5 L12.6 21.6 L15.7 19.6 L18.8 21.6 L19.4 16.5 Z" fill="#1f66e6"/> <circle cx="15.8" cy="14.3" r="3.8" fill="url(#gseal)" stroke="#c98a00" stroke-width="0.6"/></svg><div class="t" style="left:444.50px;top:340.46px;font-size:17.5px;color:#000;letter-spacing:-0.055px;">DigiCert Global Root G2</div><div class="t" style="left:720.20px;top:340.46px;font-size:17.5px;color:#000;letter-spacing:-0.050px;">DigiCert Global Root G2</div><div class="t" style="left:1020.30px;top:340.46px;font-size:17.5px;color:#000;letter-spacing:-0.211px;">15/01/2038</div><div class="t" style="left:1171.80px;top:340.46px;font-size:17.5px;color:#000;letter-spacing:-0.120px;width:128.70px;overflow:hidden;">Client Authentication</div><svg class="i" style="left:418px;top:367.7px" width="24" height="22" viewBox="0 0 24 22"><rect x="0.75" y="0.75" width="22.5" height="15" fill="url(#gcert)" stroke="#9a8462" stroke-width="1.5"/> <rect x="1.6" y="1.6" width="20.8" height="13.3" fill="none" stroke="#fffdf6" stroke-width="0.8"/> <rect x="4.5" y="5" width="15.5" height="1.1" fill="#7480d8" opacity="0.75"/> <rect x="9" y="7.9" width="7.5" height="0.9" fill="#9aa2dc" opacity="0.7"/> <rect x="4.3" y="11.2" width="4.5" height="1.1" fill="#7480d8" opacity="0.75"/> <path d="M12.2 16.5 L12.6 21.6 L15.7 19.6 L18.8 21.6 L19.4 16.5 Z" fill="#1f66e6"/> <circle cx="15.8" cy="14.3" r="3.8" fill="url(#gseal)" stroke="#c98a00" stroke-width="0.6"/></svg><div class="t" style="left:444.50px;top:368.96px;font-size:17.5px;color:#000;letter-spacing:-0.059px;">DigiCert Global Root G3</div><div class="t" style="left:720.20px;top:368.96px;font-size:17.5px;color:#000;letter-spacing:-0.055px;">DigiCert Global Root G3</div><div class="t" style="left:1020.30px;top:368.96px;font-size:17.5px;color:#000;letter-spacing:-0.211px;">15/01/2038</div><div class="t" style="left:1171.80px;top:368.96px;font-size:17.5px;color:#000;letter-spacing:-0.120px;width:128.70px;overflow:hidden;">Client Authentication</div><svg class="i" style="left:418px;top:396.2px" width="24" height="22" viewBox="0 0 24 22"><rect x="0.75" y="0.75" width="22.5" height="15" fill="url(#gcert)" stroke="#9a8462" stroke-width="1.5"/> <rect x="1.6" y="1.6" width="20.8" height="13.3" fill="none" stroke="#fffdf6" stroke-width="0.8"/> <rect x="4.5" y="5" width="15.5" height="1.1" fill="#7480d8" opacity="0.75"/> <rect x="9" y="7.9" width="7.5" height="0.9" fill="#9aa2dc" opacity="0.7"/> <rect x="4.3" y="11.2" width="4.5" height="1.1" fill="#7480d8" opacity="0.75"/> <path d="M12.2 16.5 L12.6 21.6 L15.7 19.6 L18.8 21.6 L19.4 16.5 Z" fill="#1f66e6"/> <circle cx="15.8" cy="14.3" r="3.8" fill="url(#gseal)" stroke="#c98a00" stroke-width="0.6"/></svg><div class="t" style="left:445.00px;top:397.46px;font-size:17.5px;color:#000;letter-spacing:-0.188px;">GlobalSign Root CA</div><div class="t" style="left:720.70px;top:397.46px;font-size:17.5px;color:#000;letter-spacing:-0.182px;">GlobalSign Root CA</div><div class="t" style="left:1020.70px;top:397.46px;font-size:17.5px;color:#000;letter-spacing:-0.256px;">28/01/2028</div><div class="t" style="left:1171.80px;top:397.46px;font-size:17.5px;color:#000;letter-spacing:-0.120px;width:128.70px;overflow:hidden;">Client Authentication</div><svg class="i" style="left:418px;top:424.7px" width="24" height="22" viewBox="0 0 24 22"><rect x="0.75" y="0.75" width="22.5" height="15" fill="url(#gcert)" stroke="#9a8462" stroke-width="1.5"/> <rect x="1.6" y="1.6" width="20.8" height="13.3" fill="none" stroke="#fffdf6" stroke-width="0.8"/> <rect x="4.5" y="5" width="15.5" height="1.1" fill="#7480d8" opacity="0.75"/> <rect x="9" y="7.9" width="7.5" height="0.9" fill="#9aa2dc" opacity="0.7"/> <rect x="4.3" y="11.2" width="4.5" height="1.1" fill="#7480d8" opacity="0.75"/> <path d="M12.2 16.5 L12.6 21.6 L15.7 19.6 L18.8 21.6 L19.4 16.5 Z" fill="#1f66e6"/> <circle cx="15.8" cy="14.3" r="3.8" fill="url(#gseal)" stroke="#c98a00" stroke-width="0.6"/></svg><div class="t" style="left:444.30px;top:425.96px;font-size:17.5px;color:#000;letter-spacing:-0.773px;">ISRG Root X1</div><div class="t" style="left:720.00px;top:425.96px;font-size:17.5px;color:#000;letter-spacing:-0.764px;">ISRG Root X1</div><div class="t" style="left:1020.90px;top:425.96px;font-size:17.5px;color:#000;letter-spacing:-0.278px;">04/06/2035</div><div class="t" style="left:1171.80px;top:425.96px;font-size:17.5px;color:#000;letter-spacing:-0.120px;width:128.70px;overflow:hidden;">Client Authentication</div><svg class="i" style="left:418px;top:453.2px" width="24" height="22" viewBox="0 0 24 22"><rect x="0.75" y="0.75" width="22.5" height="15" fill="url(#gcert)" stroke="#9a8462" stroke-width="1.5"/> <rect x="1.6" y="1.6" width="20.8" height="13.3" fill="none" stroke="#fffdf6" stroke-width="0.8"/> <rect x="4.5" y="5" width="15.5" height="1.1" fill="#7480d8" opacity="0.75"/> <rect x="9" y="7.9" width="7.5" height="0.9" fill="#9aa2dc" opacity="0.7"/> <rect x="4.3" y="11.2" width="4.5" height="1.1" fill="#7480d8" opacity="0.75"/> <path d="M12.2 16.5 L12.6 21.6 L15.7 19.6 L18.8 21.6 L19.4 16.5 Z" fill="#1f66e6"/> <circle cx="15.8" cy="14.3" r="3.8" fill="url(#gseal)" stroke="#c98a00" stroke-width="0.6"/></svg><div class="t" style="left:444.50px;top:454.46px;font-size:17.5px;color:#000;letter-spacing:0.075px;">Microsoft Authenticode(tm) Roo...</div><div class="t" style="left:720.20px;top:454.46px;font-size:17.5px;color:#000;letter-spacing:0.085px;">Microsoft Authenticode(tm) Root ...</div><div class="t" style="left:1020.90px;top:454.46px;font-size:17.5px;color:#000;letter-spacing:-0.267px;">31/12/1999</div><div class="t" style="left:1171.80px;top:454.46px;font-size:17.5px;color:#000;letter-spacing:-0.420px;width:128.70px;overflow:hidden;">Secure Email, Code Signing</div><svg class="i" style="left:418px;top:481.7px" width="24" height="22" viewBox="0 0 24 22"><rect x="0.75" y="0.75" width="22.5" height="15" fill="url(#gcert)" stroke="#9a8462" stroke-width="1.5"/> <rect x="1.6" y="1.6" width="20.8" height="13.3" fill="none" stroke="#fffdf6" stroke-width="0.8"/> <rect x="4.5" y="5" width="15.5" height="1.1" fill="#7480d8" opacity="0.75"/> <rect x="9" y="7.9" width="7.5" height="0.9" fill="#9aa2dc" opacity="0.7"/> <rect x="4.3" y="11.2" width="4.5" height="1.1" fill="#7480d8" opacity="0.75"/> <path d="M12.2 16.5 L12.6 21.6 L15.7 19.6 L18.8 21.6 L19.4 16.5 Z" fill="#1f66e6"/> <circle cx="15.8" cy="14.3" r="3.8" fill="url(#gseal)" stroke="#c98a00" stroke-width="0.6"/></svg><div class="t" style="left:444.50px;top:482.96px;font-size:17.5px;color:#000;letter-spacing:-0.255px;">Microsoft ECC Product Root Cert...</div><div class="t" style="left:720.20px;top:482.96px;font-size:17.5px;color:#000;letter-spacing:-0.161px;">Microsoft ECC Product Root Certifi...</div><div class="t" style="left:1020.70px;top:482.96px;font-size:17.5px;color:#000;letter-spacing:-0.256px;">27/02/2043</div><div class="t" style="left:1171.00px;top:482.96px;font-size:17.5px;color:#000;letter-spacing:0.825px;">&lt;All&gt;</div><svg class="i" style="left:418px;top:510.19999999999993px" width="24" height="22" viewBox="0 0 24 22"><rect x="0.75" y="0.75" width="22.5" height="15" fill="url(#gcert)" stroke="#9a8462" stroke-width="1.5"/> <rect x="1.6" y="1.6" width="20.8" height="13.3" fill="none" stroke="#fffdf6" stroke-width="0.8"/> <rect x="4.5" y="5" width="15.5" height="1.1" fill="#7480d8" opacity="0.75"/> <rect x="9" y="7.9" width="7.5" height="0.9" fill="#9aa2dc" opacity="0.7"/> <rect x="4.3" y="11.2" width="4.5" height="1.1" fill="#7480d8" opacity="0.75"/> <path d="M12.2 16.5 L12.6 21.6 L15.7 19.6 L18.8 21.6 L19.4 16.5 Z" fill="#1f66e6"/> <circle cx="15.8" cy="14.3" r="3.8" fill="url(#gseal)" stroke="#c98a00" stroke-width="0.6"/></svg><div class="t" style="left:444.50px;top:511.46px;font-size:17.5px;color:#000;letter-spacing:-0.324px;">Microsoft ECC TS Root Certificat...</div><div class="t" style="left:720.20px;top:511.46px;font-size:17.5px;color:#000;letter-spacing:-0.314px;">Microsoft ECC TS Root Certificate ...</div><div class="t" style="left:1020.70px;top:511.46px;font-size:17.5px;color:#000;letter-spacing:-0.256px;">27/02/2043</div><div class="t" style="left:1171.00px;top:511.46px;font-size:17.5px;color:#000;letter-spacing:0.825px;">&lt;All&gt;</div><svg class="i" style="left:418px;top:538.6999999999999px" width="24" height="22" viewBox="0 0 24 22"><rect x="0.75" y="0.75" width="22.5" height="15" fill="url(#gcert)" stroke="#9a8462" stroke-width="1.5"/> <rect x="1.6" y="1.6" width="20.8" height="13.3" fill="none" stroke="#fffdf6" stroke-width="0.8"/> <rect x="4.5" y="5" width="15.5" height="1.1" fill="#7480d8" opacity="0.75"/> <rect x="9" y="7.9" width="7.5" height="0.9" fill="#9aa2dc" opacity="0.7"/> <rect x="4.3" y="11.2" width="4.5" height="1.1" fill="#7480d8" opacity="0.75"/> <path d="M12.2 16.5 L12.6 21.6 L15.7 19.6 L18.8 21.6 L19.4 16.5 Z" fill="#1f66e6"/> <circle cx="15.8" cy="14.3" r="3.8" fill="url(#gseal)" stroke="#c98a00" stroke-width="0.6"/></svg><div class="t" style="left:444.50px;top:539.96px;font-size:17.5px;color:#000;letter-spacing:0.426px;">Microsoft Root Authority</div><div class="t" style="left:720.20px;top:539.96px;font-size:17.5px;color:#000;letter-spacing:0.430px;">Microsoft Root Authority</div><div class="t" style="left:1020.90px;top:539.96px;font-size:17.5px;color:#000;letter-spacing:-0.289px;">30/12/2020</div><div class="t" style="left:1171.00px;top:539.96px;font-size:17.5px;color:#000;letter-spacing:0.825px;">&lt;All&gt;</div><svg class="i" style="left:418px;top:567.1999999999999px" width="24" height="22" viewBox="0 0 24 22"><rect x="0.75" y="0.75" width="22.5" height="15" fill="url(#gcert)" stroke="#9a8462" stroke-width="1.5"/> <rect x="1.6" y="1.6" width="20.8" height="13.3" fill="none" stroke="#fffdf6" stroke-width="0.8"/> <rect x="4.5" y="5" width="15.5" height="1.1" fill="#7480d8" opacity="0.75"/> <rect x="9" y="7.9" width="7.5" height="0.9" fill="#9aa2dc" opacity="0.7"/> <rect x="4.3" y="11.2" width="4.5" height="1.1" fill="#7480d8" opacity="0.75"/> <path d="M12.2 16.5 L12.6 21.6 L15.7 19.6 L18.8 21.6 L19.4 16.5 Z" fill="#1f66e6"/> <circle cx="15.8" cy="14.3" r="3.8" fill="url(#gseal)" stroke="#c98a00" stroke-width="0.6"/></svg><div class="t" style="left:444.50px;top:568.46px;font-size:17.5px;color:#000;letter-spacing:0.094px;">Microsoft Root Certificate Autho...</div><div class="t" style="left:720.20px;top:568.46px;font-size:17.5px;color:#000;letter-spacing:0.263px;">Microsoft Root Certificate Authority</div><div class="t" style="left:1020.90px;top:568.46px;font-size:17.5px;color:#000;letter-spacing:-0.267px;">09/05/2021</div><div class="t" style="left:1171.00px;top:568.46px;font-size:17.5px;color:#000;letter-spacing:0.825px;">&lt;All&gt;</div><svg class="i" style="left:418px;top:595.6999999999999px" width="24" height="22" viewBox="0 0 24 22"><rect x="0.75" y="0.75" width="22.5" height="15" fill="url(#gcert)" stroke="#9a8462" stroke-width="1.5"/> <rect x="1.6" y="1.6" width="20.8" height="13.3" fill="none" stroke="#fffdf6" stroke-width="0.8"/> <rect x="4.5" y="5" width="15.5" height="1.1" fill="#7480d8" opacity="0.75"/> <rect x="9" y="7.9" width="7.5" height="0.9" fill="#9aa2dc" opacity="0.7"/> <rect x="4.3" y="11.2" width="4.5" height="1.1" fill="#7480d8" opacity="0.75"/> <path d="M12.2 16.5 L12.6 21.6 L15.7 19.6 L18.8 21.6 L19.4 16.5 Z" fill="#1f66e6"/> <circle cx="15.8" cy="14.3" r="3.8" fill="url(#gseal)" stroke="#c98a00" stroke-width="0.6"/></svg><div class="t" style="left:444.50px;top:596.96px;font-size:17.5px;color:#000;letter-spacing:0.094px;">Microsoft Root Certificate Autho...</div><div class="t" style="left:720.20px;top:596.96px;font-size:17.5px;color:#000;letter-spacing:0.149px;">Microsoft Root Certificate Authorit...</div><div class="t" style="left:1020.70px;top:596.96px;font-size:17.5px;color:#000;letter-spacing:-0.256px;">23/06/2035</div><div class="t" style="left:1171.00px;top:596.96px;font-size:17.5px;color:#000;letter-spacing:0.825px;">&lt;All&gt;</div><svg class="i" style="left:418px;top:624.1999999999999px" width="24" height="22" viewBox="0 0 24 22"><rect x="0.75" y="0.75" width="22.5" height="15" fill="url(#gcert)" stroke="#9a8462" stroke-width="1.5"/> <rect x="1.6" y="1.6" width="20.8" height="13.3" fill="none" stroke="#fffdf6" stroke-width="0.8"/> <rect x="4.5" y="5" width="15.5" height="1.1" fill="#7480d8" opacity="0.75"/> <rect x="9" y="7.9" width="7.5" height="0.9" fill="#9aa2dc" opacity="0.7"/> <rect x="4.3" y="11.2" width="4.5" height="1.1" fill="#7480d8" opacity="0.75"/> <path d="M12.2 16.5 L12.6 21.6 L15.7 19.6 L18.8 21.6 L19.4 16.5 Z" fill="#1f66e6"/> <circle cx="15.8" cy="14.3" r="3.8" fill="url(#gseal)" stroke="#c98a00" stroke-width="0.6"/></svg><div class="t" style="left:444.50px;top:625.46px;font-size:17.5px;color:#000;letter-spacing:0.094px;">Microsoft Root Certificate Autho...</div><div class="t" style="left:720.20px;top:625.46px;font-size:17.5px;color:#000;letter-spacing:0.149px;">Microsoft Root Certificate Authorit...</div><div class="t" style="left:1020.70px;top:625.46px;font-size:17.5px;color:#000;letter-spacing:-0.256px;">22/03/2036</div><div class="t" style="left:1171.00px;top:625.46px;font-size:17.5px;color:#000;letter-spacing:0.825px;">&lt;All&gt;</div><svg class="i" style="left:418px;top:652.6999999999999px" width="24" height="22" viewBox="0 0 24 22"><rect x="0.75" y="0.75" width="22.5" height="15" fill="url(#gcert)" stroke="#9a8462" stroke-width="1.5"/> <rect x="1.6" y="1.6" width="20.8" height="13.3" fill="none" stroke="#fffdf6" stroke-width="0.8"/> <rect x="4.5" y="5" width="15.5" height="1.1" fill="#7480d8" opacity="0.75"/> <rect x="9" y="7.9" width="7.5" height="0.9" fill="#9aa2dc" opacity="0.7"/> <rect x="4.3" y="11.2" width="4.5" height="1.1" fill="#7480d8" opacity="0.75"/> <path d="M12.2 16.5 L12.6 21.6 L15.7 19.6 L18.8 21.6 L19.4 16.5 Z" fill="#1f66e6"/> <circle cx="15.8" cy="14.3" r="3.8" fill="url(#gseal)" stroke="#c98a00" stroke-width="0.6"/></svg><div class="t" style="left:444.50px;top:653.96px;font-size:17.5px;color:#000;letter-spacing:-0.097px;">Microsoft Time Stamp Root Cert...</div><div class="t" style="left:720.20px;top:653.96px;font-size:17.5px;color:#000;letter-spacing:0.017px;">Microsoft Time Stamp Root Certifi...</div><div class="t" style="left:1020.70px;top:653.96px;font-size:17.5px;color:#000;letter-spacing:-0.244px;">22/10/2039</div><div class="t" style="left:1171.00px;top:653.96px;font-size:17.5px;color:#000;letter-spacing:0.825px;">&lt;All&gt;</div><svg class="i" style="left:418px;top:681.1999999999999px" width="24" height="22" viewBox="0 0 24 22"><rect x="0.75" y="0.75" width="22.5" height="15" fill="url(#gcert)" stroke="#9a8462" stroke-width="1.5"/> <rect x="1.6" y="1.6" width="20.8" height="13.3" fill="none" stroke="#fffdf6" stroke-width="0.8"/> <rect x="4.5" y="5" width="15.5" height="1.1" fill="#7480d8" opacity="0.75"/> <rect x="9" y="7.9" width="7.5" height="0.9" fill="#9aa2dc" opacity="0.7"/> <rect x="4.3" y="11.2" width="4.5" height="1.1" fill="#7480d8" opacity="0.75"/> <path d="M12.2 16.5 L12.6 21.6 L15.7 19.6 L18.8 21.6 L19.4 16.5 Z" fill="#1f66e6"/> <circle cx="15.8" cy="14.3" r="3.8" fill="url(#gseal)" stroke="#c98a00" stroke-width="0.6"/></svg><div class="t" style="left:444.50px;top:682.46px;font-size:17.5px;color:#000;letter-spacing:-1.218px;">NO LIABILITY ACCEPTED, (c)97 Ve...</div><div class="t" style="left:720.20px;top:682.46px;font-size:17.5px;color:#000;letter-spacing:-1.153px;">NO LIABILITY ACCEPTED, (c)97 VeriS...</div><div class="t" style="left:1020.90px;top:682.46px;font-size:17.5px;color:#000;letter-spacing:-0.300px;">07/01/2004</div><div class="t" style="left:1171.40px;top:682.46px;font-size:17.5px;color:#000;letter-spacing:0.000px;">Time Stamping</div><svg class="i" style="left:418px;top:709.6999999999999px" width="24" height="22" viewBox="0 0 24 22"><rect x="0.75" y="0.75" width="22.5" height="15" fill="url(#gcert)" stroke="#9a8462" stroke-width="1.5"/> <rect x="1.6" y="1.6" width="20.8" height="13.3" fill="none" stroke="#fffdf6" stroke-width="0.8"/> <rect x="4.5" y="5" width="15.5" height="1.1" fill="#7480d8" opacity="0.75"/> <rect x="9" y="7.9" width="7.5" height="0.9" fill="#9aa2dc" opacity="0.7"/> <rect x="4.3" y="11.2" width="4.5" height="1.1" fill="#7480d8" opacity="0.75"/> <path d="M12.2 16.5 L12.6 21.6 L15.7 19.6 L18.8 21.6 L19.4 16.5 Z" fill="#1f66e6"/> <circle cx="15.8" cy="14.3" r="3.8" fill="url(#gseal)" stroke="#c98a00" stroke-width="0.6"/></svg><div class="t" style="left:445.10px;top:710.96px;font-size:17.5px;color:#000;letter-spacing:-0.213px;">Symantec Enterprise Mobile Ro...</div><div class="t" style="left:720.80px;top:710.96px;font-size:17.5px;color:#000;letter-spacing:-0.106px;">Symantec Enterprise Mobile Root f...</div><div class="t" style="left:1020.30px;top:710.96px;font-size:17.5px;color:#000;letter-spacing:-0.200px;">14/03/2032</div><div class="t" style="left:1170.90px;top:710.96px;font-size:17.5px;color:#000;letter-spacing:0.073px;">Code Signing</div><svg class="i" style="left:418px;top:738.1999999999999px" width="24" height="22" viewBox="0 0 24 22"><rect x="0.75" y="0.75" width="22.5" height="15" fill="url(#gcert)" stroke="#9a8462" stroke-width="1.5"/> <rect x="1.6" y="1.6" width="20.8" height="13.3" fill="none" stroke="#fffdf6" stroke-width="0.8"/> <rect x="4.5" y="5" width="15.5" height="1.1" fill="#7480d8" opacity="0.75"/> <rect x="9" y="7.9" width="7.5" height="0.9" fill="#9aa2dc" opacity="0.7"/> <rect x="4.3" y="11.2" width="4.5" height="1.1" fill="#7480d8" opacity="0.75"/> <path d="M12.2 16.5 L12.6 21.6 L15.7 19.6 L18.8 21.6 L19.4 16.5 Z" fill="#1f66e6"/> <circle cx="15.8" cy="14.3" r="3.8" fill="url(#gseal)" stroke="#c98a00" stroke-width="0.6"/></svg><div class="t" style="left:445.50px;top:739.46px;font-size:17.5px;color:#000;letter-spacing:-0.195px;">Thawte Timestamping CA</div><div class="t" style="left:721.20px;top:739.46px;font-size:17.5px;color:#000;letter-spacing:-0.190px;">Thawte Timestamping CA</div><div class="t" style="left:1020.90px;top:739.46px;font-size:17.5px;color:#000;letter-spacing:-0.289px;">31/12/2020</div><div class="t" style="left:1171.40px;top:739.46px;font-size:17.5px;color:#000;letter-spacing:0.000px;">Time Stamping</div><div class="r" style="left:412px;top:794px;width:888.5px;height:24px;background:#f0f0f0;"></div><div class="r" style="left:438px;top:794px;width:550px;height:24px;background:#cdcdcd;"></div><svg class="i" style="left:420px;top:801px" width="8" height="10" viewBox="0 0 8 10"><path d="M6.2 1 L2.3 4.9 L6.2 8.8" fill="none" stroke="#606060" stroke-width="2.2"/></svg><svg class="i" style="left:1282.5px;top:801px" width="8" height="10" viewBox="0 0 8 10"><path d="M1.8 1 L5.7 4.9 L1.8 8.8" fill="none" stroke="#606060" stroke-width="2.2"/></svg><div class="r" style="left:1308px;top:125px;width:334px;height:696px;background:#fff;border-left:3px solid #7a7a7a;border-top:3px solid #7a7a7a;border-right:1px solid #dadada;border-bottom:1px solid #dadada;box-sizing:border-box"></div><div class="r" style="left:1311px;top:128px;width:330px;height:2px;background:#9a9a9a;"></div><div class="r" style="left:1311px;top:130px;width:330px;height:1px;background:#ffffff;"></div><div class="r" style="left:1311px;top:131px;width:330px;height:27px;background:#f0f0f0;"></div><div class="r" style="left:1311px;top:158px;width:330px;height:2px;background:#a6a6a6;"></div><div class="r" style="left:1311px;top:160px;width:330px;height:1px;background:#ffffff;"></div><div class="t" style="left:1318.80px;top:135.86px;font-size:17.5px;color:#000;font-weight:bold;letter-spacing:-0.567px;">Actions</div><div class="r" style="left:1311px;top:161px;width:330px;height:37.5px;background:linear-gradient(#bcd3ea,#9bb7d6);"></div><div class="t" style="left:1320.60px;top:171.96px;font-size:17.5px;color:#000;letter-spacing:-0.127px;">Certificates</div><svg class="i" style="left:1616.5px;top:176px" width="15" height="8" viewBox="0 0 16 8"><path d="M0 8 L8 0 L16 8 Z" fill="#000"/></svg><div class="t" style="left:1356.40px;top:206.96px;font-size:17.5px;color:#000;letter-spacing:0.336px;">More Actions</div><svg class="i" style="left:1621.3px;top:208.8px" width="7.5" height="14" viewBox="0 0 8 15"><path d="M0 0 L8 7.5 L0 15 Z" fill="#000"/></svg><div class="r" style="left:1311px;top:242px;width:330px;height:37.6px;background:linear-gradient(#bcd3ea,#9bb7d6);"></div><div class="t" style="left:1320.80px;top:252.56px;font-size:17.5px;color:#000;letter-spacing:-0.194px;">ca.la.deepnetid.com</div><svg class="i" style="left:1616.5px;top:256.5px" width="15" height="8" viewBox="0 0 16 8"><path d="M0 8 L8 0 L16 8 Z" fill="#000"/></svg><div class="t" style="left:1356.40px;top:288.76px;font-size:17.5px;color:#000;letter-spacing:0.336px;">More Actions</div><svg class="i" style="left:1621.3px;top:289.4px" width="7.5" height="14" viewBox="0 0 8 15"><path d="M0 0 L8 7.5 L0 15 Z" fill="#000"/></svg><div class="r" style="left:1313px;top:824px;width:1px;height:32px;background:#dadada;"></div><div class="r" style="left:1514px;top:824px;width:1px;height:32px;background:#dadada;"></div><div class="r" style="left:1640px;top:824px;width:1px;height:32px;background:#dadada;"></div>
</body></html>
